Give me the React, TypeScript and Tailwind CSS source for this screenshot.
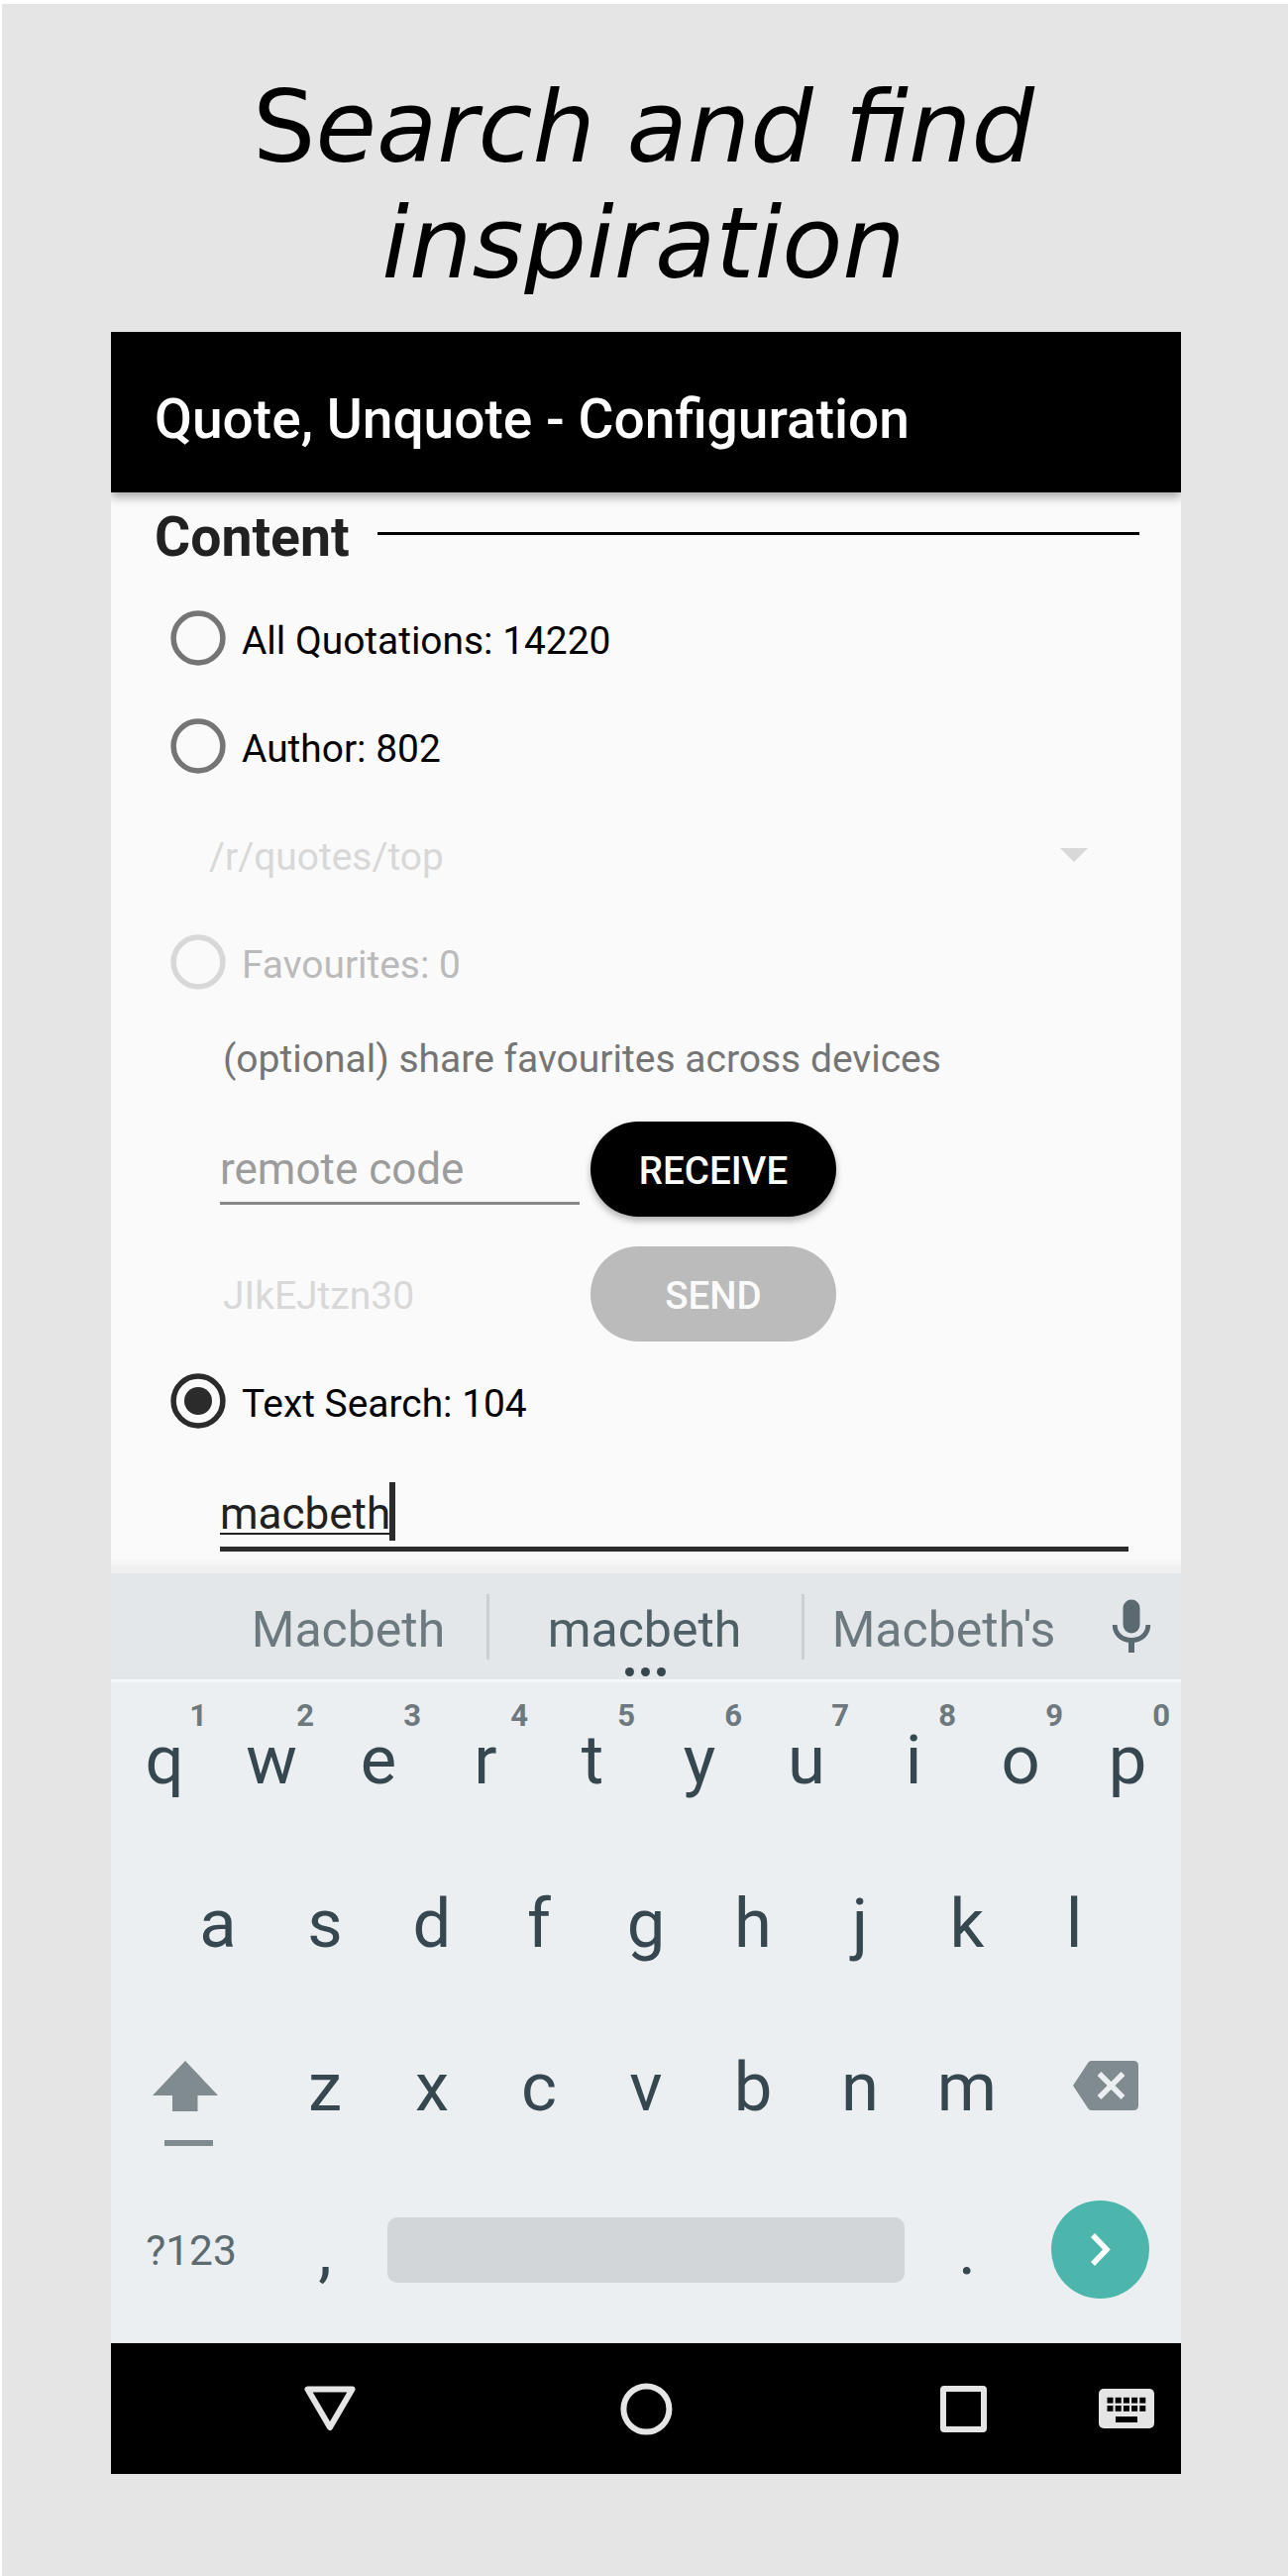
import type { ReactNode } from 'react';

function Radio({ checked = false, color }: { checked?: boolean; color: string }) {
  return (
    <svg width="56" height="56" viewBox="0 0 56 56" className="shrink-0" style={{ color }}>
      <circle cx="28" cy="28" r="24.9" fill="none" stroke="currentColor" strokeWidth="5.5" />
      {checked && <circle cx="28" cy="28" r="14" fill="currentColor" />}
    </svg>
  );
}

function RadioRow({
  label,
  ring,
  checked,
  textClass,
  heightClass,
}: {
  label: string;
  ring: string;
  checked?: boolean;
  textClass: string;
  heightClass: string;
}) {
  return (
    <label className={`flex items-center pl-[60px] ${heightClass}`}>
      <Radio checked={checked} color={ring} />
      <span className={`ml-[16px] text-[38.9px] leading-[46px] ${textClass}`}>{label}</span>
    </label>
  );
}

function Key({ children, hint }: { children: ReactNode; hint?: string }) {
  return (
    <div className="relative flex h-full w-[108px] items-center justify-center text-[68.75px] leading-[80px] text-[#37474f]">
      {children}
      {hint && (
        <span className="absolute top-[18px] right-[11px] text-[31px] leading-[32px] font-bold text-[#6d797e]">
          {hint}
        </span>
      )}
    </div>
  );
}

const topRow = ['q', 'w', 'e', 'r', 't', 'y', 'u', 'i', 'o', 'p'];
const homeRow = ['a', 's', 'd', 'f', 'g', 'h', 'j', 'k', 'l'];
const bottomRow = ['z', 'x', 'c', 'v', 'b', 'n', 'm'];

function Keyboard() {
  return (
    <div className="bg-[#ebeff2]">
      <div className="h-[3px] bg-[#eff1f1]" />
      <div className="flex h-[107px] items-center bg-[#e3e7ea] pl-[100px] text-[50px] leading-[58px] text-[#6c797f]">
        <div className="w-[279px] pt-[6px] text-center">Macbeth</div>
        <div className="h-[66px] w-[3px] bg-[#cbd0d3]" />
        <div className="relative w-[315px] pt-[6px] pr-[2px] text-center text-[#4e5f66]">
          macbeth
          <div className="absolute bottom-[-18px] left-[137px] flex gap-[7px]">
            <i className="size-[9px] rounded-full bg-[#37474f]" />
            <i className="size-[9px] rounded-full bg-[#37474f]" />
            <i className="size-[9px] rounded-full bg-[#37474f]" />
          </div>
        </div>
        <div className="h-[66px] w-[3px] bg-[#cbd0d3]" />
        <div className="w-[282px] pt-[6px] pr-[1px] text-center">Macbeth's</div>
        <svg width="40" height="54" viewBox="0 0 40 54" className="mb-[2px] ml-[28px]">
          <rect x="11.5" y="0.5" width="17" height="34" rx="8.5" fill="#5b6a70" />
          <path d="M3.200 26 C3.200 35 10 41.500 20 41.500 C30 41.500 36.800 35 36.800 26" fill="none" stroke="#5b6a70" strokeWidth="4.800" />
          <path d="M20 41 V54" stroke="#5b6a70" strokeWidth="6" />
        </svg>
      </div>
      <div className="h-[3px] bg-[#f5f7f8]" />
      <div className="flex h-[161px]">
        {topRow.map((k, i) => (
          <Key key={k} hint={String((i + 1) % 10)}>
            <span className="pb-[4px]">{k}</span>
          </Key>
        ))}
      </div>
      <div className="flex h-[165px] justify-center">
        {homeRow.map((k) => (
          <Key key={k}>{k}</Key>
        ))}
      </div>
      <div className="flex h-[165px] items-center">
        <div className="w-[162px] pt-[33px] pl-[42px]">
          <svg width="66" height="86" viewBox="0 0 66 86" fill="#808b8f">
            <path d="M33 0 L66 35 H45.500 V51 H20 V35 H0 Z" />
            <rect x="12" y="80" width="49" height="6" />
          </svg>
        </div>
        {bottomRow.map((k) => (
          <Key key={k}>{k}</Key>
        ))}
        <svg width="66" height="50" viewBox="0 0 66 50" className="mb-[3px] ml-[53px]">
          <path d="M18.500 0 H61 Q66 0 66 5 V45 Q66 50 61 50 H18.500 Q16.500 50 15 47.700 L0 25 L15 2.300 Q16.500 0 18.500 0 Z" fill="#808b8f" />
          <path d="M26.500 13 L50.500 37 M50.500 13 L26.500 37" stroke="#ebeff2" strokeWidth="5.500" />
        </svg>
      </div>
      <div className="flex h-[176px] items-center pb-[13px]">
        <div className="w-[162px] pt-[2px] text-center text-[42.5px] leading-[52px] text-[#5d6b71]">?123</div>
        <Key>
          <span className="pt-[3px]">,</span>
        </Key>
        <div className="ml-[9px] h-[66px] w-[522px] rounded-[10px] bg-[#d2d6d9]" />
        <div className="ml-[9px] h-full">
          <Key>
            <span className="pt-[3px]">.</span>
          </Key>
        </div>
        <div className="ml-[31px] flex size-[99px] items-center justify-center rounded-full bg-[#4db6ac]">
          <svg width="20" height="33" viewBox="0 0 20 33">
            <path d="M2 2 L16 16.500 L2 31" fill="none" stroke="#fff" strokeWidth="5.500" />
          </svg>
        </div>
      </div>
    </div>
  );
}

function NavBar() {
  return (
    <div className="flex h-[132px] items-center bg-black pl-[195px]">
      <svg width="52" height="46" viewBox="0 0 52 46">
        <path d="M3.500 3.500 H48.500 L26 42 Z" fill="none" stroke="#e5e5e5" strokeWidth="6" strokeLinejoin="round" />
      </svg>
      <svg width="52" height="52" viewBox="0 0 52 52" className="ml-[267px] overflow-visible">
        <circle cx="26.400" cy="26.500" r="23" fill="none" stroke="#e5e5e5" strokeWidth="6" />
      </svg>
      <div className="ml-[271px] size-[47px] rounded-[4px] border-[6px] border-[#e5e5e5]" />
      <svg width="56" height="40" viewBox="0 0 56 40" className="ml-[113px]">
        <rect width="56" height="40" rx="5" fill="#e5e5e5" />
        {[8.5, 16.7, 24.9, 33.1, 41.3].map((x) => (
          <g key={x}>
            <rect x={x} y="8.800" width="6" height="5.800" />
            <rect x={x} y="17" width="6" height="5.800" />
          </g>
        ))}
        <rect x="17" y="28" width="22" height="6" />
      </svg>
    </div>
  );
}

export default function App() {
  return (
    <div className="h-[2600px] w-[1300px] overflow-hidden bg-white pt-[4px] pl-[2px] font-['Roboto',sans-serif]">
      <div className="h-full bg-[#e5e5e5] pl-[110px]">
        <h1 className="mb-[38px] h-[293px] w-[1075px] overflow-hidden pt-[66px] text-center font-['DejaVu_Sans',sans-serif] text-[100px] leading-[117px] text-black">
          S<span className="italic">earch and find</span>
          <br />
          <span className="italic">inspiration</span>
        </h1>

        <div className="w-[1080px] bg-[#fafafa]">
          <div className="relative flex h-[162px] items-center bg-black pt-[14px] pl-[44px] text-[55.1px] leading-[64px] font-medium text-white shadow-[0_5px_9px_rgba(0,0,0,0.32)] [clip-path:inset(0_0_-20px_0)]">
            Quote, Unquote - Configuration
          </div>

          <div className="h-[1088px] bg-[linear-gradient(to_top,#eeeeee,#fafafa_12px)]">
            <div className="flex h-[92px] items-center pr-[42px] pb-[2px] pl-[44px]">
              <h2 className="pt-[2px] text-[55.3px] leading-[64px] font-bold text-[#212121]">Content</h2>
              <div className="mb-[7px] ml-auto h-[3px] w-[769px] bg-black" />
            </div>

            <RadioRow label="All Quotations: 14220" ring="#757575" textClass="text-black pt-[6px]" heightClass="h-[109px]" />
            <RadioRow label="Author: 802" ring="#757575" textClass="text-black pt-[6px]" heightClass="h-[109px]" />

            <div className="flex h-[109px] items-center justify-between pr-[94px] pl-[99px]">
              <span className="pt-[6px] text-[38.9px] leading-[46px] text-[#d8d8d8]">/r/quotes/top</span>
              <svg width="28" height="14" viewBox="0 0 28 14" className="mt-[2px]">
                <path d="M0 0 H28 L14 14 Z" fill="#d8d8d8" />
              </svg>
            </div>

            <RadioRow label="Favourites: 0" ring="#d8d8d8" textClass="text-[#bababa] pt-[6px]" heightClass="h-[109px]" />

            <div className="flex h-[87px] items-center pl-[113px] text-[39px] leading-[46px] text-[#757575]">
              (optional) share favourites across devices
            </div>

            <div className="flex h-[136px] items-center pl-[110px]">
              <div className="flex h-[71px] w-[363px] items-center border-b-[3px] border-[#858887] pt-[3px] text-[44px] leading-[52px] text-[#9c9c9c]">
                remote code
              </div>
              <button className="ml-[11px] h-[96px] w-[248px] rounded-full bg-black pt-[3px] text-[38.5px] leading-[46px] font-medium text-white shadow-[0_4px_7px_rgba(0,0,0,0.3)]">
                RECEIVE
              </button>
            </div>

            <div className="flex h-[116px] items-center pl-[113px]">
              <div className="w-[371px] pt-[3px] text-[39px] leading-[46px] text-[#d8d8d8]">JIkEJtzn30</div>
              <button className="h-[96px] w-[248px] rounded-full bg-[#bbbbbb] pt-[3px] text-[38.5px] leading-[46px] font-medium text-[#fafafa]">
                SEND
              </button>
            </div>

            <RadioRow label="Text Search: 104" ring="#2b2b2b" checked textClass="text-black pt-[5px]" heightClass="h-[100px]" />

            <div className="h-[121px] pt-[32px] pl-[110px]">
              <div className="flex h-[70px] w-[917px] items-center border-b-[5px] border-[#2b2b2b] text-[44px] leading-[52px] text-[#212121]">
                <span className="pb-[2px] underline decoration-[2px] underline-offset-[4px] [text-decoration-skip-ink:none]">
                  macbeth
                </span>
                <span className="mb-[6px] ml-[-1px] h-[59px] w-[6px] bg-[#2b2b2b]" />
              </div>
            </div>
          </div>

          <Keyboard />
          <NavBar />
        </div>
      </div>
    </div>
  );
}
